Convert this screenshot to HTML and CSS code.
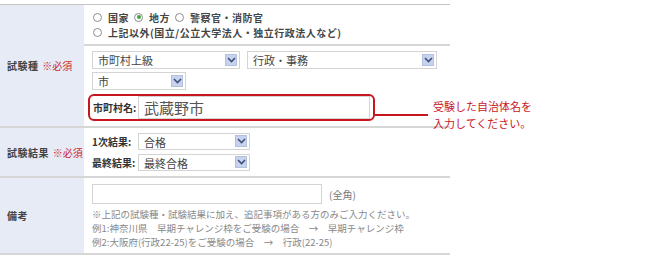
FILE: index.html
```html
<!DOCTYPE html>
<html lang="ja">
<head>
    <meta charset="UTF-8">
    <title>試験情報</title>
    <link rel="stylesheet" href="styles.css">
</head>
<body>

<table class="form-table">
    <tr class="row-type">
        <th rowspan="2">試験種 <span class="req">※必須</span></th>
        <td class="radios">
            <div class="radio-line">
                <span class="radio"></span>国家
                <span class="radio checked"></span>地方
                <span class="radio"></span>警察官・消防官
            </div>
            <div class="radio-line">
                <span class="radio"></span>上記以外(国立/公立大学法人・独立行政法人など)
            </div>
        </td>
    </tr>
    <tr class="row-select">
        <td>
            <div class="select-line">
                <span class="select w148">市町村上級<i class="arrow"><svg width="9" height="6" viewBox="0 0 9 6"><path d="M1 1l3.5 3.5L8 1" fill="none" stroke="#3d4f7a" stroke-width="1.6"/></svg></i></span>
                <span class="select w190">行政・事務<i class="arrow"><svg width="9" height="6" viewBox="0 0 9 6"><path d="M1 1l3.5 3.5L8 1" fill="none" stroke="#3d4f7a" stroke-width="1.6"/></svg></i></span>
            </div>
            <div class="select-line">
                <span class="select w94">市<i class="arrow"><svg width="9" height="6" viewBox="0 0 9 6"><path d="M1 1l3.5 3.5L8 1" fill="none" stroke="#3d4f7a" stroke-width="1.6"/></svg></i></span>
            </div>
            <div class="city-box">
                <span class="field-label">市町村名:</span>
                <span class="city-input">武蔵野市</span>
                <div class="callout">
                    <span class="callout-line"></span>
                    <span class="callout-text">受験した自治体名を<br>入力してください。</span>
                </div>
            </div>
        </td>
    </tr>
    <tr class="row-result">
        <th>試験結果 <span class="req">※必須</span></th>
        <td>
            <div class="result-line">
                <span class="field-label">1次結果:</span>
                <span class="select w112">合格<i class="arrow"><svg width="9" height="6" viewBox="0 0 9 6"><path d="M1 1l3.5 3.5L8 1" fill="none" stroke="#3d4f7a" stroke-width="1.6"/></svg></i></span>
            </div>
            <div class="result-line">
                <span class="field-label">最終結果:</span>
                <span class="select w112">最終合格<i class="arrow"><svg width="9" height="6" viewBox="0 0 9 6"><path d="M1 1l3.5 3.5L8 1" fill="none" stroke="#3d4f7a" stroke-width="1.6"/></svg></i></span>
            </div>
        </td>
    </tr>
    <tr class="row-note">
        <th>備考</th>
        <td>
            <div class="note-input-line">
                <span class="note-input"></span>
                <span class="hint">(全角)</span>
            </div>
            <p class="notes">
                ※上記の試験種・試験結果に加え、追記事項がある方のみご入力ください。<br>
                例1:神奈川県　早期チャレンジ枠をご受験の場合　→　早期チャレンジ枠<br>
                例2:大阪府(行政22-25)をご受験の場合　→　行政(22-25)
            </p>
        </td>
    </tr>
</table>

</body>
</html>
```

FILE: styles.css
```css
body {
    margin: 0;
    padding: 4px 0 0;
    background-color: #fff;
    font-family: "Noto Sans CJK JP", "DejaVu Sans", sans-serif;
    font-size: 10px;
    color: #333;
}

.form-table {
    width: 450px;
    border-collapse: collapse;
    border-top: 1px solid #c4c4c4;
}

.form-table th,
.form-table td {
    padding: 0;
    border-bottom: 2px solid #d6d6d6;
    vertical-align: middle;
}

.form-table th {
    width: 84px;
    background-color: #e7ebf6;
    text-align: left;
    padding-left: 7px;
    box-sizing: border-box;
    font-size: 10px;
    font-weight: bold;
    color: #444;
    letter-spacing: 0.5px;
    white-space: nowrap;
}

.form-table td {
    padding-left: 8px;
}

.req {
    color: #cc1f2c;
    font-weight: normal;
    letter-spacing: 0;
    margin-left: 1px;
}

.row-type td {
    height: 39px;
}

.row-select td {
    height: 80px;
    padding-left: 4px;
}

.row-result td {
    height: 48px;
}

.row-note td {
    height: 74px;
}

.radio-line {
    display: flex;
    align-items: center;
    height: 15px;
    font-weight: bold;
    color: #444;
    letter-spacing: 0.5px;
}

.radio {
    width: 9px;
    height: 9px;
    border: 1px solid #8d8d8d;
    border-radius: 50%;
    background-color: #fff;
    margin-right: 6px;
    margin-left: 1px;
    box-sizing: border-box;
    display: inline-flex;
    align-items: center;
    justify-content: center;
}

.radio-line .radio:not(:first-child) {
    margin-left: 5px;
}

.radio.checked::after {
    content: "";
    width: 4px;
    height: 4px;
    border-radius: 50%;
    background-color: #3ca83c;
}

.select-line {
    display: flex;
    gap: 7px;
    padding-left: 4px;
    margin-bottom: 3px;
}

.select {
    position: relative;
    display: inline-flex;
    align-items: center;
    height: 18px;
    border: 1px solid #d4d4d4;
    box-sizing: border-box;
    padding-left: 5px;
    font-size: 11px;
    color: #444;
    background-color: #fff;
}

.w148 { width: 148px; }
.w190 { width: 190px; }
.w94 { width: 94px; }
.w112 { width: 112px; height: 17px; }

.arrow {
    position: absolute;
    right: 2px;
    top: 2px;
    width: 12px;
    height: 12px;
    background-color: #c7d3ee;
    border: 1px solid #b3c0de;
    box-sizing: border-box;
    display: flex;
    align-items: center;
    justify-content: center;
}

.w112 .arrow {
    top: 1px;
}

.city-box {
    position: relative;
    display: flex;
    align-items: center;
    width: 287px;
    height: 27px;
    border: 2px solid #c8161f;
    border-radius: 6px;
    box-sizing: border-box;
    padding-left: 3px;
    margin-top: 4px;
}

.field-label {
    font-weight: bold;
    color: #333;
    font-size: 10px;
    width: 46px;
    flex-shrink: 0;
}

.city-box .field-label {
    width: 45px;
}

.city-input {
    display: flex;
    align-items: center;
    width: 232px;
    height: 23px;
    border: 1px solid #d4d4d4;
    box-sizing: border-box;
    padding-left: 5px;
    font-size: 15px;
    color: #555;
}

.callout {
    position: absolute;
    left: 285px;
    top: 2px;
    display: flex;
    align-items: center;
}

.callout-line {
    width: 53px;
    height: 2px;
    background-color: #c8161f;
}

.callout-text {
    margin-left: 5px;
    color: #c8161f;
    font-size: 11px;
    line-height: 17px;
    white-space: nowrap;
}

.result-line {
    display: flex;
    align-items: center;
    height: 21px;
}

.note-input-line {
    display: flex;
    align-items: center;
    gap: 7px;
    margin-top: 6px;
}

.note-input {
    width: 230px;
    height: 20px;
    border: 1px solid #d4d4d4;
    box-sizing: border-box;
}

.hint {
    color: #777;
    font-size: 10px;
}

.notes {
    margin: 3px 0 4px;
    color: #888;
    font-size: 9.5px;
    line-height: 14px;
}
```
